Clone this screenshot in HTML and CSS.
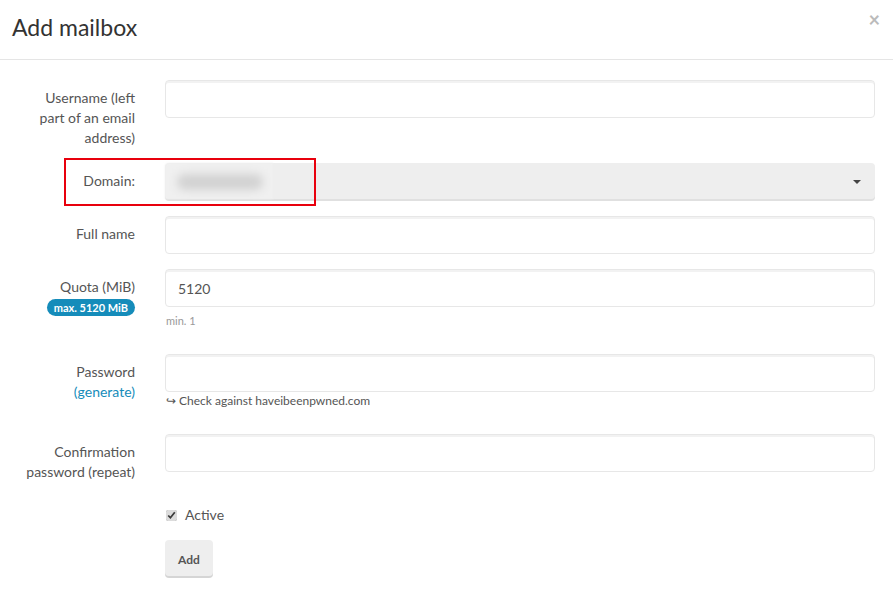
FILE: index.html
```html
<!DOCTYPE html>
<html lang="en">
<head>
    <meta charset="UTF-8">
    <meta name="viewport" content="width=device-width, initial-scale=1.0">
    <title>Add mailbox</title>
    <link rel="stylesheet" href="styles.css">
</head>
<body>
    <div class="modal">
        <div class="modal-header">
            <h3 class="modal-title">Add mailbox</h3>
            <span class="close">&times;</span>
        </div>
        <div class="modal-body">
            <form class="form-horizontal">
                <div class="form-group">
                    <label class="control-label">Username (left part of an email address)</label>
                    <div class="field">
                        <input type="text" class="form-control">
                    </div>
                </div>
                <div class="form-group domain-group">
                    <label class="control-label">Domain:</label>
                    <div class="field">
                        <div class="select-btn">
                            <span class="blur-box"><span class="blurred"></span></span>
                            <span class="caret"></span>
                        </div>
                    </div>
                    <div class="highlight"></div>
                </div>
                <div class="form-group">
                    <label class="control-label">Full name</label>
                    <div class="field">
                        <input type="text" class="form-control">
                    </div>
                </div>
                <div class="form-group">
                    <label class="control-label">Quota (MiB)<br><span class="badge">max. 5120 MiB</span></label>
                    <div class="field">
                        <input type="text" class="form-control" value="5120">
                        <small class="help-block">min. 1</small>
                    </div>
                </div>
                <div class="form-group">
                    <label class="control-label">Password<br><a href="#" class="link">(generate)</a></label>
                    <div class="field">
                        <input type="password" class="form-control">
                        <small class="hibp">&#8618; Check against haveibeenpwned.com</small>
                    </div>
                </div>
                <div class="form-group">
                    <label class="control-label">Confirmation password (repeat)</label>
                    <div class="field">
                        <input type="password" class="form-control">
                    </div>
                </div>
                <div class="form-group checkbox-row">
                    <div></div>
                    <div class="field">
                        <label class="checkbox"><input type="checkbox" checked> Active</label>
                    </div>
                </div>
                <div class="form-group">
                    <div></div>
                    <div class="field">
                        <button type="button" class="btn">Add</button>
                    </div>
                </div>
            </form>
        </div>
    </div>
</body>
</html>
```

FILE: styles.css
```css
body {
    margin: 0;
    font-family: Lato, "Open Sans", sans-serif;
    font-size: 14px;
    line-height: 20px;
    color: #555;
    background-color: white;
}

.modal {
    width: 893px;
    height: 604px;
    background-color: white;
}

.modal-header {
    border-bottom: 1px solid #e5e5e5;
    position: relative;
    box-sizing: border-box;
    height: 60px;
}

.modal-title {
    margin: 0;
    padding: 14px 0 0 12px;
    font-size: 23px;
    font-weight: normal;
    line-height: 26px;
    color: #333;
}

.close {
    position: absolute;
    top: 9px;
    right: 13px;
    font-size: 20px;
    font-weight: bold;
    color: #bbb;
}

.modal-body {
    padding: 20px 0 0 0;
}

.form-group {
    display: grid;
    grid-template-columns: 135px 710px;
    column-gap: 30px;
    margin-bottom: 15px;
    position: relative;
}

.control-label {
    text-align: right;
    padding-top: 8px;
    padding-left: 20px;
}

.form-control {
    display: block;
    width: 100%;
    height: 38px;
    box-sizing: border-box;
    padding: 8px 12px;
    border: 1px solid #e7e7e7;
    border-radius: 4px;
    box-shadow: inset 0 2px 0 rgba(0,0,0,0.05);
    font-family: inherit;
    font-size: 14px;
    color: #555;
    outline: none;
}

.select-btn {
    height: 38px;
    box-sizing: border-box;
    background-color: #eee;
    border-radius: 4px;
    box-shadow: inset 0 -2px 0 rgba(0,0,0,0.06);
    position: relative;
}

.blur-box {
    position: absolute;
    left: 0;
    top: 0;
    width: 108px;
    height: 36px;
    border-radius: 4px 0 0 0;
    background-color: #f0f0f0;
    filter: blur(1px);
}

.blurred {
    position: absolute;
    left: 12px;
    top: 11px;
    width: 86px;
    height: 16px;
    border-radius: 8px;
    background-color: #d2d2d2;
    filter: blur(4px);
}

.caret {
    position: absolute;
    right: 14px;
    top: 17px;
    border-top: 4px solid #444;
    border-left: 4px solid transparent;
    border-right: 4px solid transparent;
}

.highlight {
    position: absolute;
    left: 64px;
    top: -5px;
    width: 248px;
    height: 44px;
    border: 2px solid #e8000d;
}

.badge {
    display: inline-block;
    margin-top: 2px;
    padding: 0 7px;
    background-color: #158cba;
    color: white;
    font-size: 11px;
    font-weight: bold;
    line-height: 17px;
    border-radius: 9px;
}

.link {
    color: #158cba;
    text-decoration: none;
}

.help-block {
    display: block;
    margin: 5px 0 10px 1px;
    font-size: 11px;
    line-height: 17px;
    color: #999;
}

.hibp {
    display: block;
    margin: 1px 0 10px 1px;
    font-size: 12px;
    line-height: 16px;
    color: #555;
}

.checkbox-row {
    margin-top: 23px;
}

.checkbox {
    display: flex;
    align-items: center;
    gap: 8px;
    padding-left: 1px;
}

.checkbox input {
    margin: 0;
    width: 11px;
    height: 11px;
    accent-color: #dcdcdc;
}

.btn {
    height: 38px;
    padding: 0 13px;
    border: none;
    border-radius: 4px;
    background-color: #eee;
    box-shadow: inset 0 -2px 0 rgba(0,0,0,0.1);
    font-family: inherit;
    font-size: 12px;
    font-weight: bold;
    color: #555;
}
```
